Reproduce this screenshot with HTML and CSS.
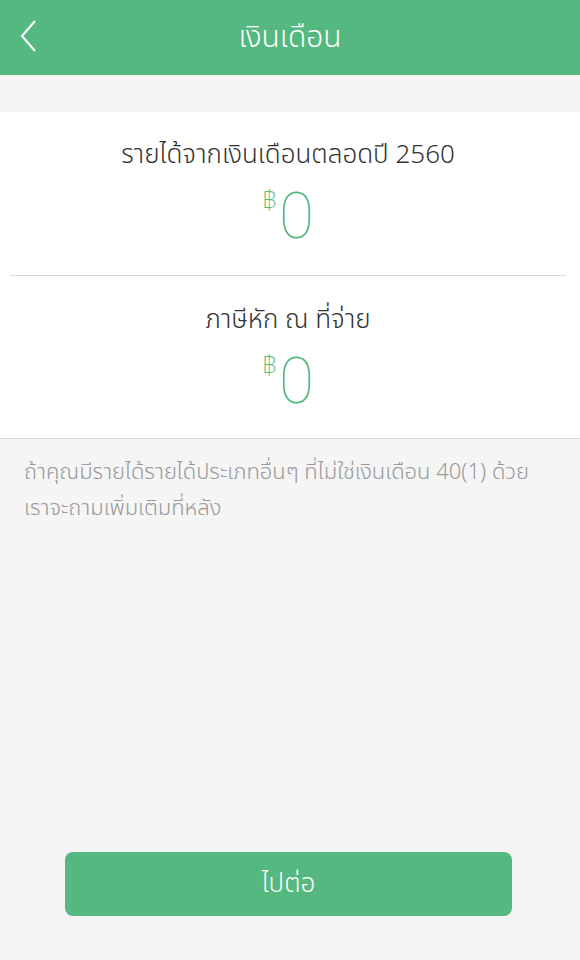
FILE: index.html
```html
<html lang="th">
<head>
    <meta charset="UTF-8">
    <meta name="viewport" content="width=device-width, initial-scale=1.0">
    <title>เงินเดือน</title>
    <link rel="stylesheet" href="styles.css">
</head>
<body>
    <div class="header">
        <a class="back" href="#">
            <svg width="16" height="32" viewBox="0 0 16 32">
                <path d="M15 1 L2 16 L15 31" fill="none" stroke="#fff" stroke-width="2"/>
            </svg>
        </a>
        <h1>เงินเดือน</h1>
    </div>

    <div class="card">
        <div class="field">
            <div class="field-label">รายได้จากเงินเดือนตลอดปี 2560</div>
            <div class="amount"><span class="baht">฿</span><span class="value">0</span></div>
        </div>
        <div class="field">
            <div class="field-label">ภาษีหัก ณ ที่จ่าย</div>
            <div class="amount"><span class="baht">฿</span><span class="value">0</span></div>
        </div>
    </div>

    <p class="note">ถ้าคุณมีรายได้รายได้ประเภทอื่นๆ ที่ไม่ใช่เงินเดือน 40(1) ด้วย เราจะถามเพิ่มเติมที่หลัง</p>

    <div class="footer">
        <button type="button">ไปต่อ</button>
    </div>
</body>
</html>
```

FILE: styles.css
```css
body {
    margin: 0;
    font-family: "Noto Sans Thai", "Noto Sans", "Open Sans", sans-serif;
    background-color: #f5f5f6;
    color: #333;
    height: 960px;
    display: flex;
    flex-direction: column;
}
.header {
    background-color: #55b880;
    height: 75px;
    display: flex;
    align-items: center;
    justify-content: center;
    position: relative;
}
.header h1 {
    margin: 0;
    color: #fff;
    font-size: 30px;
    font-weight: 300;
}
.back {
    position: absolute;
    left: 20px;
    top: 20px;
}
.card {
    background-color: #fff;
    margin-top: 37px;
    border-bottom: 1px solid #d6d6d6;
}
.field {
    height: 163px;
    display: flex;
    flex-direction: column;
    align-items: center;
    box-sizing: border-box;
    padding-top: 26px;
    margin: 0 14px 0 10px;
}
.field + .field {
    border-top: 1px solid #d6d6d6;
    padding-top: 27px;
}
.field-label {
    font-size: 26px;
    font-weight: 300;
    line-height: 34px;
}
.amount {
    display: flex;
    align-items: flex-start;
    color: #55b880;
    margin-top: 15px;
}
.baht {
    font-size: 26px;
    font-weight: 200;
    line-height: 28px;
    margin-right: 2px;
}
.value {
    font-family: Roboto, sans-serif;
    font-size: 64px;
    font-weight: 100;
    line-height: 60px;
}
.note {
    margin: 16px 24px 0;
    font-size: 22px;
    font-weight: 300;
    line-height: 36px;
    color: #999;
}
.footer {
    margin-top: auto;
    padding: 0 68px 44px 65px;
}
button {
    width: 100%;
    height: 64px;
    background-color: #55b880;
    color: #fff;
    border: none;
    border-radius: 8px;
    font-family: inherit;
    font-size: 26px;
    font-weight: 300;
}
```
